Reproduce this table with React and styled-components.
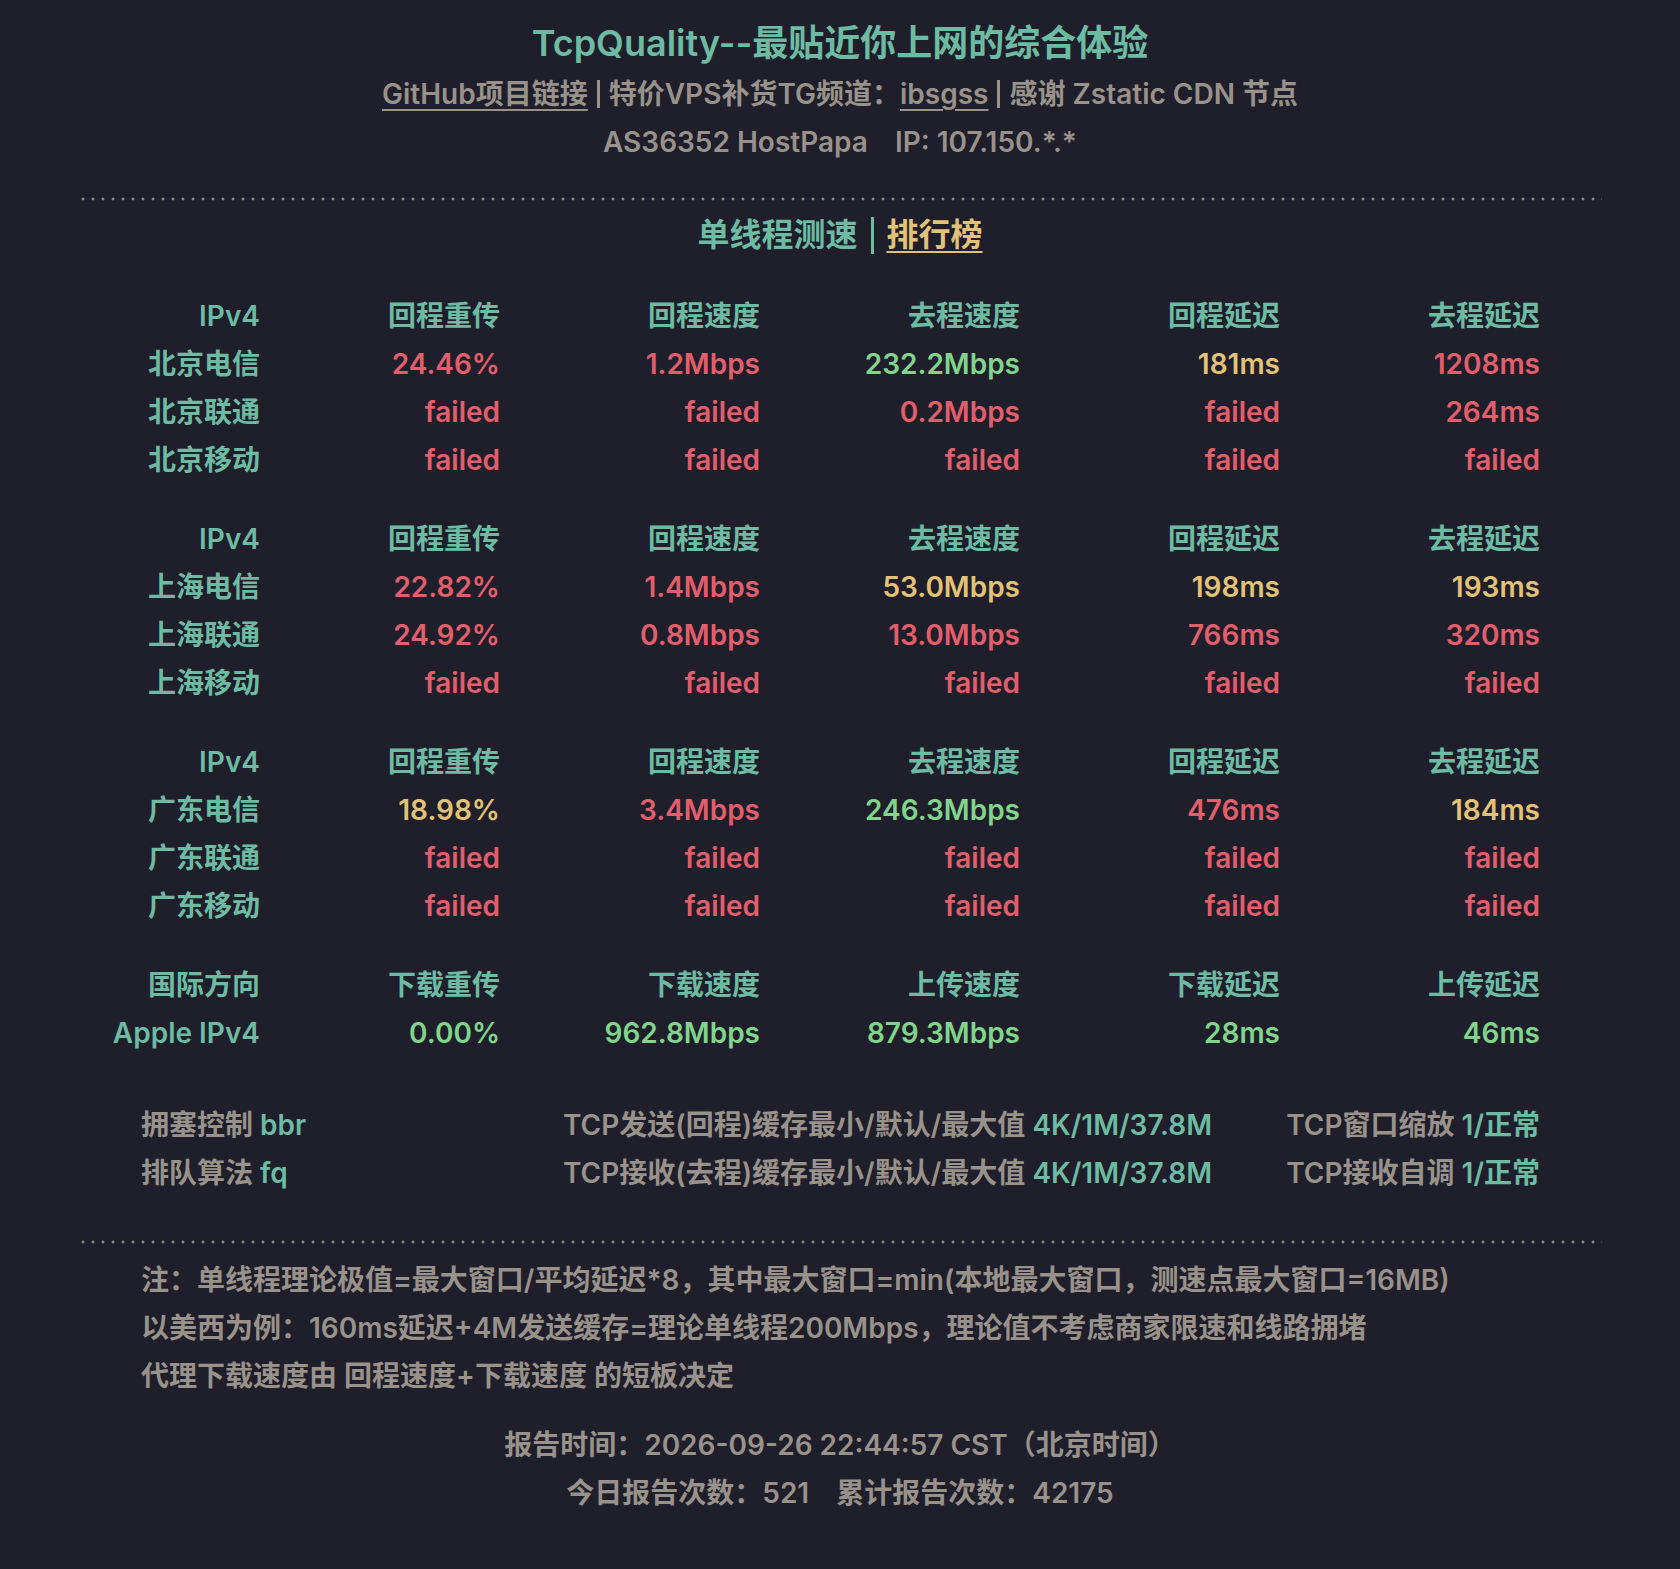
import React from 'react';
import styled, { createGlobalStyle } from 'styled-components';

const GlobalStyle = createGlobalStyle`
  html, body {
    margin: 0;
    padding: 0;
    background: #1f1e2b;
  }
  body {
    font-family: Inter, "Noto Sans CJK SC", "Noto Sans", sans-serif;
    font-weight: 600;
    color: #98928a;
  }
`;

const tones = {
  teal: '#6cbba2',
  gray: '#98928a',
  red: '#e35e6b',
  green: '#80d58b',
  yellow: '#e2c276'
};

const Page = styled.div`
  min-height: 1569px;
  background: #1f1e2b;
  padding-top: 19px;
  box-sizing: border-box;
`;

const Container = styled.div`
  width: 1524px;
  margin: 0 auto;
`;

const Header = styled.header`
  text-align: center;
`;

const Title = styled.h1`
  margin: 0;
  font-size: 36px;
  line-height: 48px;
  font-weight: 600;
  color: ${tones.teal};
`;

const SubLine = styled.div`
  font-size: 28px;
  line-height: 48px;
  margin-top: ${props => props.top || 0}px;
  color: ${tones.gray};
  display: flex;
  justify-content: center;
  align-items: center;
`;

const Link = styled.a`
  color: ${props => props.color || tones.gray};
  text-decoration: underline;
  text-decoration-thickness: 2px;
  text-underline-offset: 5px;
`;

const Sep = styled.span`
  display: inline-block;
  width: 3px;
  height: ${props => props.h || 28}px;
  margin: 0 ${props => props.gap || 9}px;
  background: ${props => props.color || tones.gray};
`;

const Gap = styled.span`
  display: inline-block;
  width: ${props => props.w}px;
`;

const Dotted = styled.div`
  height: 4px;
  margin-top: ${props => props.top}px;
  background-image: radial-gradient(circle, #8e897f 1.3px, transparent 1.7px);
  background-size: 10px 4px;
  background-position: 0 0;
`;

const Section = styled.div`
  margin-top: 10px;
  font-size: 32px;
  line-height: 48px;
  display: flex;
  justify-content: center;
  align-items: center;
  color: ${tones.teal};
`;

const Table = styled.div`
  margin: 33px 0 0 22px;
  display: flex;
  flex-direction: column;
  gap: 31px;
`;

const Group = styled.div`
  display: grid;
  grid-template-columns: 160px 240px repeat(4, 260px);
`;

const Cell = styled.div`
  text-align: right;
  font-size: 28px;
  line-height: 48px;
  white-space: nowrap;
  color: ${props => tones[props.tone] || tones.teal};
`;

const Info = styled.div`
  margin: 44px 62px 0 63px;
  display: grid;
  grid-template-columns: 1fr auto 328px;
`;

const InfoCell = styled.div`
  font-size: 28px;
  line-height: 48px;
  white-space: nowrap;
  text-align: ${props => props.align || 'left'};
`;

const Val = styled.span`
  color: ${tones.teal};
`;

const Notes = styled.div`
  margin: 12px 0 0 63px;
  font-size: 28px;
  line-height: 48px;
`;

const Footer = styled.footer`
  margin-top: 21px;
  text-align: center;
  font-size: 28px;
  line-height: 48px;
`;

const groups = [
  {
    head: ['IPv4', '回程重传', '回程速度', '去程速度', '回程延迟', '去程延迟'],
    rows: [
      ['北京电信', ['24.46%', 'red'], ['1.2Mbps', 'red'], ['232.2Mbps', 'green'], ['181ms', 'yellow'], ['1208ms', 'red']],
      ['北京联通', ['failed', 'red'], ['failed', 'red'], ['0.2Mbps', 'red'], ['failed', 'red'], ['264ms', 'red']],
      ['北京移动', ['failed', 'red'], ['failed', 'red'], ['failed', 'red'], ['failed', 'red'], ['failed', 'red']]
    ]
  },
  {
    head: ['IPv4', '回程重传', '回程速度', '去程速度', '回程延迟', '去程延迟'],
    rows: [
      ['上海电信', ['22.82%', 'red'], ['1.4Mbps', 'red'], ['53.0Mbps', 'yellow'], ['198ms', 'yellow'], ['193ms', 'yellow']],
      ['上海联通', ['24.92%', 'red'], ['0.8Mbps', 'red'], ['13.0Mbps', 'red'], ['766ms', 'red'], ['320ms', 'red']],
      ['上海移动', ['failed', 'red'], ['failed', 'red'], ['failed', 'red'], ['failed', 'red'], ['failed', 'red']]
    ]
  },
  {
    head: ['IPv4', '回程重传', '回程速度', '去程速度', '回程延迟', '去程延迟'],
    rows: [
      ['广东电信', ['18.98%', 'yellow'], ['3.4Mbps', 'red'], ['246.3Mbps', 'green'], ['476ms', 'red'], ['184ms', 'yellow']],
      ['广东联通', ['failed', 'red'], ['failed', 'red'], ['failed', 'red'], ['failed', 'red'], ['failed', 'red']],
      ['广东移动', ['failed', 'red'], ['failed', 'red'], ['failed', 'red'], ['failed', 'red'], ['failed', 'red']]
    ]
  },
  {
    head: ['国际方向', '下载重传', '下载速度', '上传速度', '下载延迟', '上传延迟'],
    rows: [
      ['Apple IPv4', ['0.00%', 'green'], ['962.8Mbps', 'green'], ['879.3Mbps', 'green'], ['28ms', 'green'], ['46ms', 'green']]
    ]
  }
];

function ResultGroup({ head, rows }) {
  return (
    <Group>
      {head.map(h => (
        <Cell key={h} tone="teal">{h}</Cell>
      ))}
      {rows.map(row => (
        <React.Fragment key={row[0]}>
          <Cell tone="teal">{row[0]}</Cell>
          {row.slice(1).map(([text, tone], i) => (
            <Cell key={i} tone={tone}>{text}</Cell>
          ))}
        </React.Fragment>
      ))}
    </Group>
  );
}

export default function App() {
  return (
    <Page>
      <GlobalStyle />
      <Container>
        <Header>
          <Title>TcpQuality--最贴近你上网的综合体验</Title>
          <SubLine top={3}>
            <Link href="#">GitHub项目链接</Link>
            <Sep />
            特价VPS补货TG频道：<Link href="#">ibsgss</Link>
            <Sep />
            感谢 Zstatic CDN 节点
          </SubLine>
          <SubLine>
            AS36352 HostPapa<Gap w={27} />IP: 107.150.*.*
          </SubLine>
        </Header>

        <Dotted top={31} />

        <Section>
          单线程测速
          <Sep color={tones.teal} h={37} gap={13} />
          <Link href="#" color={tones.yellow}>排行榜</Link>
        </Section>

        <Table>
          {groups.map((g, i) => (
            <ResultGroup key={i} head={g.head} rows={g.rows} />
          ))}
        </Table>

        <Info>
          <InfoCell>拥塞控制 <Val>bbr</Val></InfoCell>
          <InfoCell align="right">TCP发送(回程)缓存最小/默认/最大值 <Val>4K/1M/37.8M</Val></InfoCell>
          <InfoCell align="right">TCP窗口缩放 <Val>1/正常</Val></InfoCell>
          <InfoCell>排队算法 <Val>fq</Val></InfoCell>
          <InfoCell align="right">TCP接收(去程)缓存最小/默认/最大值 <Val>4K/1M/37.8M</Val></InfoCell>
          <InfoCell align="right">TCP接收自调 <Val>1/正常</Val></InfoCell>
        </Info>

        <Dotted top={43} />

        <Notes>
          <div>注：单线程理论极值=最大窗口/平均延迟*8，其中最大窗口=min(本地最大窗口，测速点最大窗口=16MB)</div>
          <div>以美西为例：160ms延迟+4M发送缓存=理论单线程200Mbps，理论值不考虑商家限速和线路拥堵</div>
          <div>代理下载速度由 回程速度+下载速度 的短板决定</div>
        </Notes>

        <Footer>
          <div>报告时间：2026-09-26 22:44:57 CST（北京时间）</div>
          <div>今日报告次数：521<Gap w={20} /> 累计报告次数：42175</div>
        </Footer>
      </Container>
    </Page>
  );
}
